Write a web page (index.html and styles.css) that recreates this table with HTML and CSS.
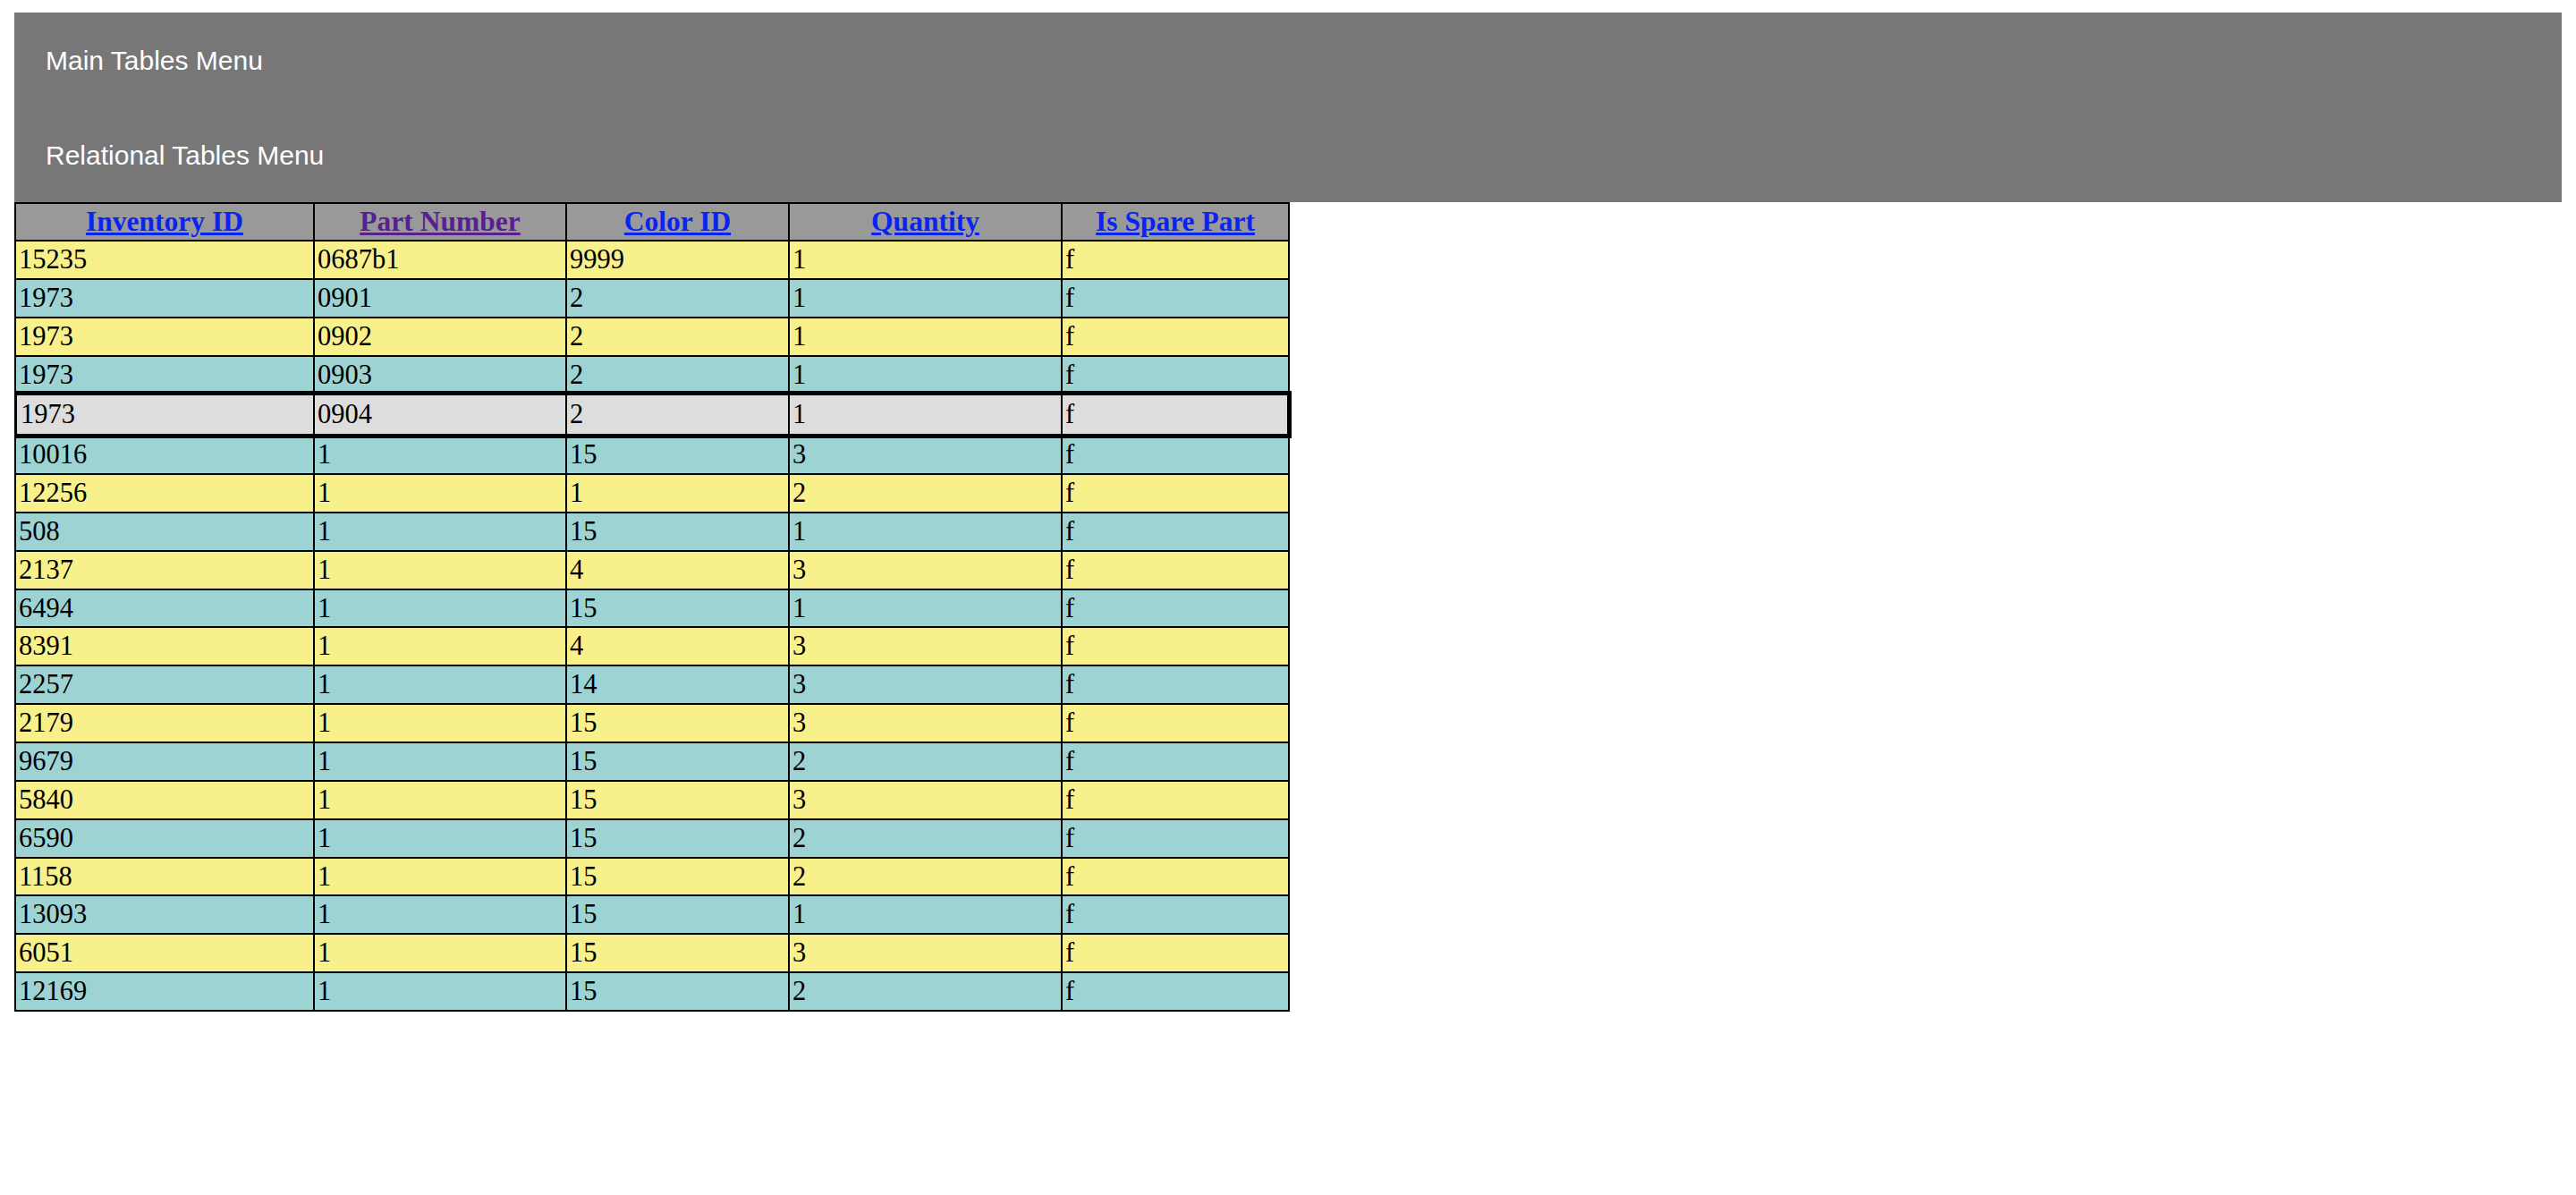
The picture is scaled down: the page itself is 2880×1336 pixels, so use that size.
FILE: index.html
```html
<!DOCTYPE html>
<html lang="en">
<head>
<meta charset="utf-8">
<title>Inventory Parts</title>
<link rel="stylesheet" href="styles.css">
</head>
<body>
<nav class="menu">
  <a class="menu-item" href="#">Main Tables Menu</a>
  <a class="menu-item" href="#">Relational Tables Menu</a>
</nav>
<table class="data">
  <colgroup>
    <col class="c1"><col class="c2"><col class="c3"><col class="c4"><col class="c5">
  </colgroup>
  <thead>
    <tr>
      <th><a href="#">Inventory ID</a></th>
      <th><a class="visited" href="#">Part Number</a></th>
      <th><a href="#">Color ID</a></th>
      <th><a href="#">Quantity</a></th>
      <th><a href="#">Is Spare Part</a></th>
    </tr>
  </thead>
  <tbody>
    <tr><td>15235</td><td>0687b1</td><td>9999</td><td>1</td><td>f</td></tr>
    <tr><td>1973</td><td>0901</td><td>2</td><td>1</td><td>f</td></tr>
    <tr><td>1973</td><td>0902</td><td>2</td><td>1</td><td>f</td></tr>
    <tr><td>1973</td><td>0903</td><td>2</td><td>1</td><td>f</td></tr>
    <tr class="hovered"><td>1973</td><td>0904</td><td>2</td><td>1</td><td>f</td></tr>
    <tr><td>10016</td><td>1</td><td>15</td><td>3</td><td>f</td></tr>
    <tr><td>12256</td><td>1</td><td>1</td><td>2</td><td>f</td></tr>
    <tr><td>508</td><td>1</td><td>15</td><td>1</td><td>f</td></tr>
    <tr><td>2137</td><td>1</td><td>4</td><td>3</td><td>f</td></tr>
    <tr><td>6494</td><td>1</td><td>15</td><td>1</td><td>f</td></tr>
    <tr><td>8391</td><td>1</td><td>4</td><td>3</td><td>f</td></tr>
    <tr><td>2257</td><td>1</td><td>14</td><td>3</td><td>f</td></tr>
    <tr><td>2179</td><td>1</td><td>15</td><td>3</td><td>f</td></tr>
    <tr><td>9679</td><td>1</td><td>15</td><td>2</td><td>f</td></tr>
    <tr><td>5840</td><td>1</td><td>15</td><td>3</td><td>f</td></tr>
    <tr><td>6590</td><td>1</td><td>15</td><td>2</td><td>f</td></tr>
    <tr><td>1158</td><td>1</td><td>15</td><td>2</td><td>f</td></tr>
    <tr><td>13093</td><td>1</td><td>15</td><td>1</td><td>f</td></tr>
    <tr><td>6051</td><td>1</td><td>15</td><td>3</td><td>f</td></tr>
    <tr><td>12169</td><td>1</td><td>15</td><td>2</td><td>f</td></tr>
  </tbody>
</table>
</body>
</html>
```
FILE: styles.css
```css
html, body {
  background: #ffffff;
}

body {
  margin: 14px 16px 0 16px;
  font-family: "Liberation Serif", "Times New Roman", serif;
  font-size: 30.5px;
}

.menu {
  display: flex;
  flex-direction: column;
  background: #777777;
}

.menu-item {
  display: block;
  padding: 37px 37px 35px 35px;
  font-family: "Liberation Sans", Arial, Helvetica, sans-serif;
  font-size: 30px;
  line-height: 34px;
  color: #ffffff;
  text-decoration: none;
}

.data {
  border-collapse: collapse;
  table-layout: fixed;
  width: 1424px;
  font-family: "Liberation Serif", "Times New Roman", serif;
  font-size: 30.5px;
}

.c1 { width: 334px; }
.c2 { width: 282px; }
.c3 { width: 249px; }
.c4 { width: 305px; }
.c5 { width: 254px; }

.data th,
.data td {
  border: 2px solid #000000;
  padding: 2px 3px;
  line-height: 36.85px;
  text-align: left;
  vertical-align: middle;
}

.data th {
  background: #999999;
  text-align: center;
  font-weight: bold;
  font-size: 31.5px;
  line-height: 36px;
}

.data th a {
  color: #0a24f0;
  text-decoration: underline;
}

.data th a.visited {
  color: #5a1f8f;
}

.data tbody tr:nth-child(odd) td {
  background: #f8f08b;
}

.data tbody tr:nth-child(even) td {
  background: #9dd3d3;
}

.data tbody tr.hovered {
  outline: 5px solid #000000;
  outline-offset: -2px;
}

.data tbody tr.hovered td {
  background: #dddddd;
  padding-top: 4px;
  padding-bottom: 4px;
}

.data tbody tr.hovered td:first-child {
  padding-left: 5px;
}
```
